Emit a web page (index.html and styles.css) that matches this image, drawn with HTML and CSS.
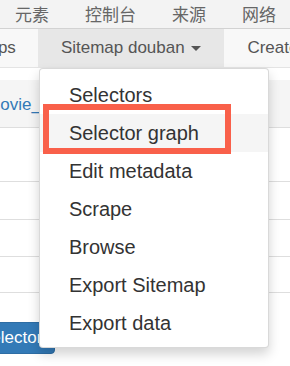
FILE: index.html
```html
<!DOCTYPE html>
<html lang="en">
  <head>
    <meta charset="UTF-8" />
    <title>Sitemap douban</title>
    <link rel="stylesheet" href="styles.css">
  </head>
  <body>
    <!-- devtools panel tabs -->
    <div class="devtools-tabs">
      <span>元素</span>
      <span>控制台</span>
      <span>来源</span>
      <span>网络</span>
    </div>

    <nav class="navbar">
      <a class="nav-link nav-first">Sitemaps</a>
      <div class="dropdown">
        <a class="nav-link active">Sitemap douban <span class="caret"></span></a>
        <ul class="dropdown-menu">
          <li>Selectors</li>
          <li class="hover">Selector graph</li>
          <li>Edit metadata</li>
          <li>Scrape</li>
          <li>Browse</li>
          <li>Export Sitemap</li>
          <li>Export data</li>
          <div class="highlight"></div>
        </ul>
      </div>
      <a class="nav-link">Create new sitemap</a>
    </nav>

    <div class="content">
      <div class="table">
        <div class="row row-1"><a class="cell-link">douban_movie_top</a></div>
        <div class="row row-2"></div>
        <div class="row row-3"></div>
        <div class="row row-4"></div>
        <div class="row row-5"></div>
      </div>
      <button class="btn-primary">Selector</button>
    </div>
  </body>
</html>
```

FILE: styles.css
```css
html,
body {
  margin: 0;
  width: 290px;
  height: 366px;
  overflow: hidden;
  background-color: #fff;
  font-family: "Liberation Sans", Arial, sans-serif;
}
.devtools-tabs {
  display: flex;
  gap: 36px;
  height: 28px;
  padding-left: 15px;
  background-color: #f3f3f3;
  border-bottom: 1px solid #d2d2d2;
  font-family: "Noto Sans CJK SC", sans-serif;
  font-size: 17px;
  line-height: 27px;
  color: #666;
  white-space: nowrap;
}
.navbar {
  display: flex;
  height: 38px;
  background-color: #f8f8f8;
  border-bottom: 1px solid #e4e4e4;
  white-space: nowrap;
}
.nav-link {
  display: block;
  flex-shrink: 0;
  padding: 0 23px;
  font-size: 17px;
  line-height: 38px;
  color: #555;
}
.nav-first {
  padding-right: 22px;
  margin-left: -78px;
}
.dropdown {
  position: relative;
  flex-shrink: 0;
}
.nav-link.active {
  background-color: #e7e7e7;
}
.caret {
  display: inline-block;
  width: 0;
  height: 0;
  margin-left: 2px;
  vertical-align: middle;
  border-top: 5px solid #555;
  border-left: 5px solid transparent;
  border-right: 5px solid transparent;
}
.dropdown-menu {
  position: absolute;
  top: calc(100% + 1px);
  left: 1px;
  z-index: 10;
  box-sizing: border-box;
  width: 230px;
  margin: 0;
  padding: 7px 0 5px;
  list-style: none;
  background-color: #fff;
  border: 1px solid rgba(0, 0, 0, 0.15);
  border-radius: 4px;
  box-shadow: 0 6px 12px rgba(0, 0, 0, 0.175);
}
.dropdown-menu li {
  padding: 5px 29px;
  font-size: 20px;
  line-height: 28px;
  color: #333;
}
.dropdown-menu li.hover {
  background-color: #f5f5f5;
}
/* annotation box drawn over the menu */
.highlight {
  position: absolute;
  top: 35px;
  left: 3px;
  box-sizing: border-box;
  width: 188px;
  height: 50px;
  border: 6px solid #f9604a;
}
.content {
  padding-top: 12px;
}
.row {
  box-sizing: border-box;
  display: flex;
  align-items: center;
  border-bottom: 1px solid #dedede;
  white-space: nowrap;
}
.row-1 {
  height: 48px;
  padding-top: 3px;
  background-color: #f5f5f5;
}
.row-2 {
  height: 54px;
}
.row-3 {
  height: 38px;
}
.row-4 {
  height: 37px;
}
.row-5 {
  height: 36px;
}
.cell-link {
  margin-left: -80px;
  font-size: 17px;
  color: #337ab7;
}
.btn-primary {
  display: block;
  height: 32px;
  margin-top: 29px;
  margin-left: -33px;
  padding: 0 12px;
  font-family: "Liberation Sans", Arial, sans-serif;
  font-size: 17px;
  color: #fff;
  background-color: #337ab7;
  border: 1px solid #2e6da4;
  border-radius: 4px;
}
```
